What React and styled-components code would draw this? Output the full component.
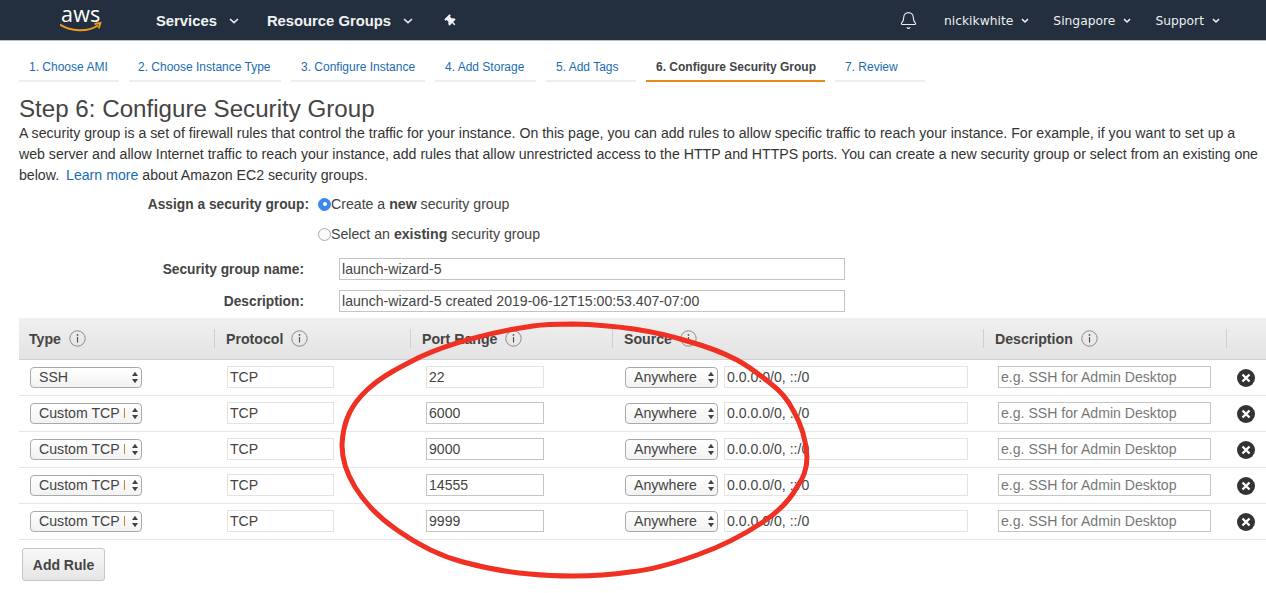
import React from 'react';
import styled, { createGlobalStyle } from 'styled-components';
import { Bell } from 'lucide-react';
import { FaThumbtack } from 'react-icons/fa';

const Global = createGlobalStyle`
html, body { margin: 0; padding: 0; background: #fff; overflow: hidden; }
body { font-family: "Liberation Sans", Arial, sans-serif; color: #444; font-size: 14px; }
* { box-sizing: border-box; }
`;

const Page = styled.div`
  position: relative;
  width: 1266px;
  height: 593px;
  overflow: hidden;
`;

const TopBar = styled.header`
  height: 41px;
  background: #232f3e;
  border-bottom: 1px solid #b9bcc0;
  display: flex;
  align-items: center;
  color: #fff;
`;

const Logo = styled.div`
  width: 82px;
  margin-left: 60px;
  height: 40px;
  position: relative;
  flex: none;
  svg { display: block; }
`;

const LogoWord = styled.span`
  position: absolute;
  left: 1px;
  top: 1px;
  font-family: "Open Sans", sans-serif;
  font-size: 21.5px;
  line-height: 26px;
  letter-spacing: 0.2px;
  color: #fff;
`;

const MainItem = styled.div`
  display: flex;
  align-items: center;
  font-weight: bold;
  font-size: 14.8px;
  padding-top: 1px;
  margin-left: ${p => p.$ml}px;
  color: #f2f3f3;
`;

const Right = styled.div`
  margin-left: auto;
  display: flex;
  align-items: center;
  font-family: "DejaVu Sans", Verdana, sans-serif;
  font-size: 12.3px;
  padding-top: 1px;
  padding-right: 46px;
  color: #eceeef;
`;

const RightItem = styled.div`
  display: flex;
  align-items: center;
  margin-left: ${p => p.$ml}px;
`;

const Caret = ({ ml = 8, big }) => (
  <svg width={big ? 10 : 8} height="6" viewBox={big ? '0 0 10 6' : '0 0 8 6'} style={{ marginLeft: ml }}>
    <path d={big ? 'M1 1l4 3.6L9 1' : 'M1 1.2l3 2.8 3-2.8'} fill="none" stroke="#e8eaec" strokeWidth="1.6" />
  </svg>
);

const Tabs = styled.nav`
  display: flex;
  gap: 10px;
  padding: 0 0 0 19px;
  margin-top: 9px;
`;

const Tab = styled.div`
  width: ${p => p.$w}px;
  height: 32px;
  border-bottom: 2px solid ${p => (p.$active ? '#e8891c' : '#eeeeee')};
  padding-left: ${p => p.$pl}px;
  font-size: 12px;
  line-height: 35px;
  white-space: nowrap;
  color: ${p => (p.$active ? '#444' : '#1a6cb3')};
  font-weight: ${p => (p.$active ? 'bold' : 'normal')};
`;

const Content = styled.main`
  padding-left: 19px;
`;

const Title = styled.h1`
  margin: 13px 0 0;
  font-size: 24.15px;
  line-height: 28px;
  font-weight: normal;
  color: #444;
`;

const Intro = styled.p`
  margin: 0;
  width: 1240px;
  font-size: 14.15px;
  line-height: 21px;
  color: #333;
  a { color: #1a6cb3; text-decoration: none; margin-left: 3px; }
`;

const Form = styled.div`
  margin-top: 3px;
`;

const RadioRow = styled.div`
  display: flex;
  align-items: center;
  height: 30px;
`;

const Label = styled.label`
  width: ${p => p.$w}px;
  flex: none;
  text-align: right;
  font-weight: bold;
  font-size: 13.75px;
  color: #444;
`;

const Radio = styled.span`
  width: 13px;
  height: 13px;
  margin-left: 9px;
  flex: none;
  border-radius: 50%;
  display: flex;
  align-items: center;
  justify-content: center;
  background: ${p => (p.$on ? '#3d86f0' : '#fafafa')};
  border: 1px solid ${p => (p.$on ? '#3d86f0' : '#aaa')};
  &::after {
    content: "";
    display: ${p => (p.$on ? 'block' : 'none')};
    width: 4px;
    height: 4px;
    border-radius: 50%;
    background: #fff;
  }
`;

const RadioText = styled.span`
  font-size: 14.15px;
  color: #444;
  b { font-weight: bold; }
`;

const NameRow = styled.div`
  display: flex;
  align-items: center;
  height: 22px;
  margin-top: ${p => p.$mt}px;
`;

const TextBox = styled.input`
  display: block;
  width: ${p => p.$w}px;
  height: 22px;
  margin-left: ${p => p.$ml || 0}px;
  padding: 0 2px;
  border: 1px solid ${p => (p.$faint ? '#e3e3e3' : '#c4c4c4')};
  border-radius: 0;
  outline: none;
  background: #fff;
  font-family: "Liberation Sans", Arial, sans-serif;
  font-size: 14.1px;
  color: #444;
  &::placeholder { color: #777; opacity: 1; }
`;

const Grid = styled.div`
  display: grid;
  grid-template-columns: 195px 196px 202px 371px 243px 40px;
  width: 1247px;
`;

const Head = styled(Grid)`
  margin-top: 6px;
  height: 42px;
  background: linear-gradient(#f0f0f0, #e3e3e3);
  border-bottom: 1px solid #cfcfcf;
  align-items: center;
`;

const HeadCell = styled.div`
  display: flex;
  align-items: center;
  gap: 8px;
  height: 19px;
  padding-left: ${p => (p.$first ? 10 : 11)}px;
  border-left: ${p => (p.$first ? 'none' : '1px solid #cfcfcf')};
  font-size: 14.15px;
  font-weight: bold;
  color: #444;
`;

const Row = styled(Grid)`
  height: 36px;
  border-bottom: 1px solid #e6e6e6;
  align-items: center;
`;

const Cell = styled.div`
  display: flex;
  align-items: center;
  gap: 6px;
  height: 22px;
  margin-top: -1px;
  padding-left: ${p => p.$pl}px;
`;

const SelectWrap = styled.div`
  position: relative;
  width: ${p => p.$w}px;
  height: 21px;
  flex: none;
  svg { position: absolute; right: 3px; top: 4px; pointer-events: none; }
`;

const Select = styled.select`
  appearance: none;
  width: 100%;
  height: 21px;
  padding: 0 16px 0 8px;
  border: 1px solid #a9a9a9;
  border-radius: 4px;
  background: linear-gradient(#fff, #f2f2f2);
  font-family: "Liberation Sans", Arial, sans-serif;
  font-size: 14.15px;
  color: #444;
  outline: none;
`;

const Arrows = () => (
  <svg width="8" height="13" viewBox="0 0 8 13">
    <path d="M4 .8L7 5H1zM4 12.2L1 8h6z" fill="#444" />
  </svg>
);

const Info = () => (
  <svg width="17" height="17" viewBox="0 0 17 17">
    <circle cx="8.5" cy="8.5" r="7.7" fill="none" stroke="#8a8a8a" />
    <path d="M8.5 7v5.5" stroke="#555" strokeWidth="1.2" />
    <circle cx="8.5" cy="4.9" r=".9" fill="#555" />
  </svg>
);

const RemoveIcon = styled.svg`
  display: block;
  flex: none;
  margin-top: 1px;
`;

const AddRule = styled.button`
  display: block;
  margin: 8px 0 0 3px;
  width: 83px;
  height: 33px;
  border: 1px solid #c6c6c6;
  border-radius: 3px;
  background: linear-gradient(#f8f8f8, #e6e6e6);
  font-family: "Liberation Sans", Arial, sans-serif;
  font-size: 14px;
  font-weight: bold;
  color: #444;
  padding: 0;
`;

const Scribble = styled.svg`
  position: absolute;
  left: 0;
  top: 0;
  pointer-events: none;
`;

const tabs = [
  { t: '1. Choose AMI', w: 100, pl: 10 },
  { t: '2. Choose Instance Type', w: 152, pl: 9 },
  { t: '3. Configure Instance', w: 134, pl: 10 },
  { t: '4. Add Storage', w: 101, pl: 10 },
  { t: '5. Add Tags', w: 90, pl: 10 },
  { t: '6. Configure Security Group', w: 179, pl: 10, active: true },
  { t: '7. Review', w: 90, pl: 10 },
];

const rules = [
  { type: 'SSH', port: '22' },
  { type: 'Custom TCP Rule', port: '6000' },
  { type: 'Custom TCP Rule', port: '9000' },
  { type: 'Custom TCP Rule', port: '14555' },
  { type: 'Custom TCP Rule', port: '9999' },
];

const heads = ['Type', 'Protocol', 'Port Range', 'Source', 'Description'];

// traced from the hand drawn circle in the screenshot
const circle = `M342 445 C343 420 352 404 367 390 C382 376 400 367 420 357 C448 344 490 332 533 326
C546 324 560 324 573 324 C615 325 655 331 687 341 C705 346 722 352 737 360 C750 367 760 375 770 383
C782 392 788 400 793 410 C800 422 806 437 807 457 C807 470 803 478 797 487 C790 500 778 512 763 522
C742 536 720 547 697 555 C675 563 650 570 630 572 C610 575 590 576 573 576 C555 576 540 575 530 574
C505 572 485 568 463 562 C440 556 417 544 397 530 C378 517 365 503 355 487 C347 474 342 460 342 445Z`;

export default function App() {
  return (
    <Page>
      <Global />
      <TopBar>
        <Logo>
          <LogoWord>aws</LogoWord>
          <svg width="44" height="40" viewBox="0 0 44 40">
            <path d="M0 24.5c11 7 27 8 38 1" fill="none" stroke="#f29a1f" strokeWidth="2" />
            <path d="M34.5 24l6-1-1.8 5.4" fill="none" stroke="#f29a1f" strokeWidth="1.8" />
          </svg>
        </Logo>
        <MainItem $ml={14}>Services<Caret ml={12} big /></MainItem>
        <MainItem $ml={28}>Resource Groups<Caret ml={12} big /></MainItem>
        <MainItem $ml={32}>
          <FaThumbtack size={12} color="#f2f3f3" style={{ transform: 'rotate(-45deg)' }} />
        </MainItem>
        <Right>
          <Bell size={19} strokeWidth={1.4} color="#eceeef" />
          <RightItem $ml={26}>nickikwhite<Caret /></RightItem>
          <RightItem $ml={24}>Singapore<Caret /></RightItem>
          <RightItem $ml={24}>Support<Caret /></RightItem>
        </Right>
      </TopBar>

      <Tabs>
        {tabs.map(x => (
          <Tab key={x.t} $w={x.w} $pl={x.pl} $active={x.active}>{x.t}</Tab>
        ))}
      </Tabs>

      <Content>
        <Title>Step 6: Configure Security Group</Title>
        <Intro>
          A security group is a set of firewall rules that control the traffic for your instance. On this page, you can add rules to allow specific traffic to reach your instance. For example, if you want to set up a web server and allow Internet traffic to reach your instance, add rules that allow unrestricted access to the HTTP and HTTPS ports. You can create a new security group or select from an existing one below. <a>Learn more</a> about Amazon EC2 security groups.
        </Intro>

        <Form>
          <RadioRow>
            <Label $w={290}>Assign a security group:</Label>
            <Radio $on />
            <RadioText>Create a <b>new</b> security group</RadioText>
          </RadioRow>
          <RadioRow>
            <Label $w={290} />
            <Radio />
            <RadioText>Select an <b>existing</b> security group</RadioText>
          </RadioRow>
          <NameRow $mt={9}>
            <Label $w={285}>Security group name:</Label>
            <TextBox $w={506} $ml={35} readOnly value="launch-wizard-5" />
          </NameRow>
          <NameRow $mt={10}>
            <Label $w={285}>Description:</Label>
            <TextBox $w={506} $ml={35} readOnly value="launch-wizard-5 created 2019-06-12T15:00:53.407-07:00" />
          </NameRow>
        </Form>

        <Head>
          {heads.map((h, i) => (
            <HeadCell key={h} $first={i === 0}><span>{h}</span><Info /></HeadCell>
          ))}
          <HeadCell />
        </Head>

        {rules.map((r, i) => (
          <Row key={i}>
            <Cell $pl={11}>
              <SelectWrap $w={112}>
                <Select value={r.type} onChange={() => {}}>
                  <option>SSH</option>
                  <option>Custom TCP Rule</option>
                </Select>
                <Arrows />
              </SelectWrap>
            </Cell>
            <Cell $pl={13}><TextBox $w={107} $faint readOnly value="TCP" /></Cell>
            <Cell $pl={16}><TextBox $w={118} $faint={i === 0} readOnly value={r.port} /></Cell>
            <Cell $pl={13}>
              <SelectWrap $w={93}>
                <Select value="Anywhere" onChange={() => {}}>
                  <option>Anywhere</option>
                </Select>
                <Arrows />
              </SelectWrap>
              <TextBox $w={244} $faint readOnly value="0.0.0.0/0, ::/0" />
            </Cell>
            <Cell $pl={15}><TextBox $w={213} readOnly placeholder="e.g. SSH for Admin Desktop" /></Cell>
            <Cell $pl={11}>
              <RemoveIcon width="18" height="18" viewBox="0 0 18 18">
                <circle cx="9" cy="9" r="9" fill="#333" />
                <path d="M5.5 5.5l7 7M12.5 5.5l-7 7" stroke="#fff" strokeWidth="2.4" />
              </RemoveIcon>
            </Cell>
          </Row>
        ))}

        <AddRule>Add Rule</AddRule>
      </Content>

      <Scribble width="1266" height="593" viewBox="0 0 1266 593">
        <path d={circle} fill="none" stroke="#ef3023" strokeWidth="5" />
      </Scribble>
    </Page>
  );
}
